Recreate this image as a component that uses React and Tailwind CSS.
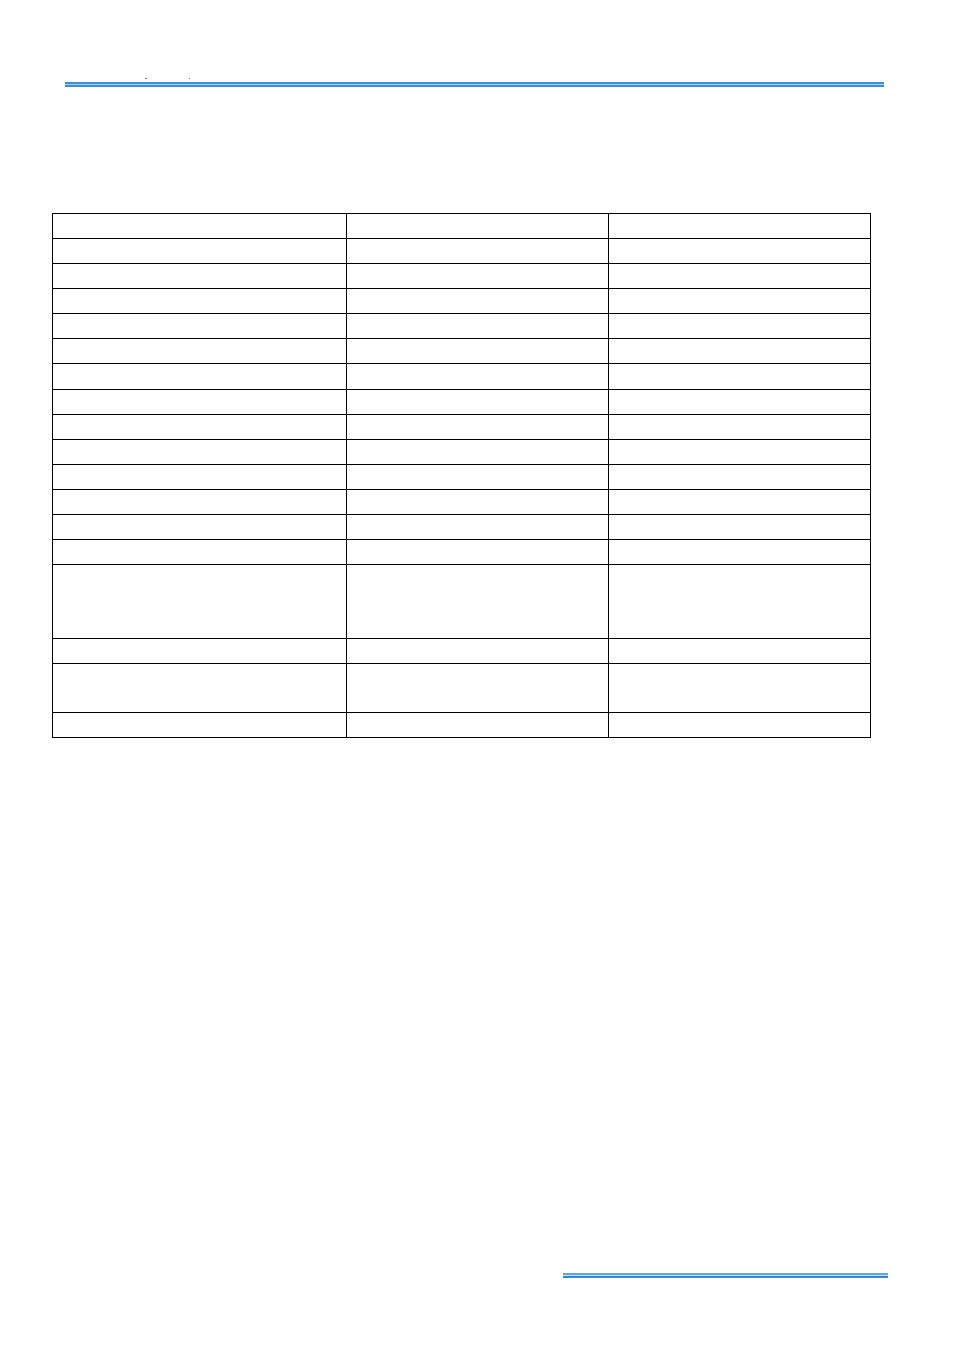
const rows = [25, 25, 25, 25, 25, 25, 26, 25, 25, 25, 25, 25, 25, 25, 74, 25, 49, 25];

function Rule({ top, mid, bottom }) {
  return (
    <div className="flex flex-col">
      <div className={`h-[2px] ${top}`} />
      <div className={`h-[1px] ${mid}`} />
      <div className={`h-[2px] ${bottom}`} />
    </div>
  );
}

export default function App() {
  return (
    <div className="flex h-[1356px] w-[954px] flex-col bg-white font-['Liberation_Sans',sans-serif]">
      <div className="mt-[78px] flex h-[1px]">
        <span className="ml-[145px] h-[1px] w-[2px] bg-[#3d8fd8]" />
        <span className="ml-[42px] h-[1px] w-[1px] bg-[#3d8fd8]" />
      </div>
      <div className="ml-[65px] mt-[3px] w-[819px]">
        <Rule top="bg-[#3d91db]" mid="bg-[#a6d1f2]" bottom="bg-[#3d8dd6]" />
      </div>

      <div className="ml-[52px] mt-[126px] w-[819px] border-l border-t border-black">
        {rows.map((h, i) => (
          <div key={i} className="flex" style={{ height: h }}>
            <div className="w-[294px] border-b border-r border-black" />
            <div className="w-[262px] border-b border-r border-black" />
            <div className="w-[262px] border-b border-r border-black" />
          </div>
        ))}
      </div>

      <div className="mb-[78px] ml-[563px] mt-auto w-[325px]">
        <Rule top="bg-[#60a7df]" mid="bg-[#c4e0f6]" bottom="bg-[#3c85c9]" />
      </div>
    </div>
  );
}
